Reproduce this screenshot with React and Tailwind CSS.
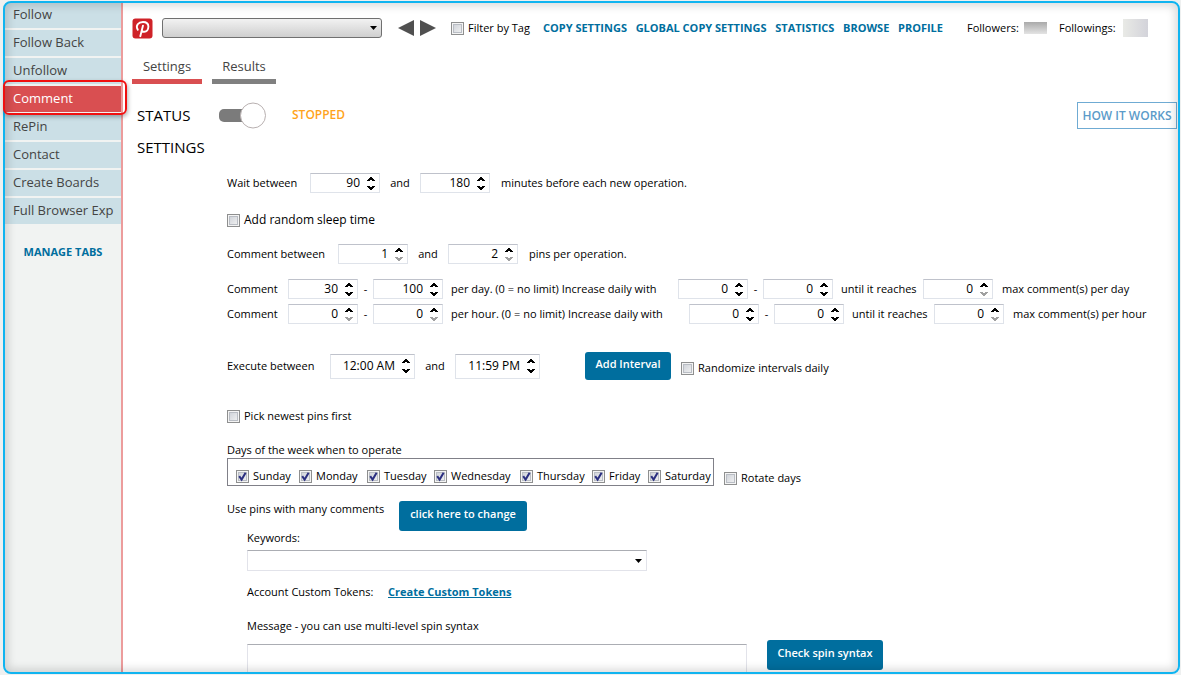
import { useState } from "react";

const tabs = ["Follow", "Follow Back", "Unfollow", "Comment", "RePin", "Contact", "Create Boards", "Full Browser Exp"];
const topLinks = ["COPY SETTINGS", "GLOBAL COPY SETTINGS", "STATISTICS", "BROWSE", "PROFILE"];
const days = [
  ["Sunday", "w-[63px]"],
  ["Monday", "w-[68px]"],
  ["Tuesday", "w-[67px]"],
  ["Wednesday", "w-[86px]"],
  ["Thursday", "w-[72px]"],
  ["Friday", "w-[56px]"],
  ["Saturday", "w-[64px]"],
];

function Check({ label, checked = false, className = "" }) {
  return (
    <label className={`flex shrink-0 items-center gap-1 whitespace-nowrap ${className}`}>
      <span className="relative flex shrink-0">
        <input
          type="checkbox"
          defaultChecked={checked}
          className="peer size-[13px] appearance-none border border-[#8e8f8f] bg-linear-to-br from-[#c9cdd4] to-[#f6f6f6] shadow-[inset_0_0_0_1px_#f4f4f4,inset_0_0_0_2px_#b9bdc4]"
        />
        <svg viewBox="0 0 13 13" className="pointer-events-none absolute inset-0 hidden size-[13px] peer-checked:block">
          <path d="M3.2 6.2 L5.6 9.6 L9.6 2.8" fill="none" stroke="#2b2f80" strokeWidth="2" />
        </svg>
      </span>
      {label}
    </label>
  );
}

function Spin({ label, value, time = false, atMin = false }) {
  const [n, setN] = useState(value);
  const step = (d) => !time && setN((v) => Math.max(0, Number(v) + d));
  return (
    <span
      className={`flex shrink-0 border border-[#dfe3ea] border-t-[#bfc2cb] bg-white ${time ? "h-[25px] w-[85px]" : "h-5 w-[70px]"}`}
    >
      <input
        aria-label={label}
        value={n}
        onChange={(e) => setN(e.target.value)}
        className="w-0 min-w-0 flex-1 bg-transparent pr-[2px] text-right text-xs outline-none"
      />
      <span className={`flex w-[17px] flex-col items-center justify-center ${time ? "gap-1" : "gap-[3px]"}`}>
        <button type="button" aria-label={`Increase ${label}`} onClick={() => step(1)}>
          <svg viewBox="0 0 8 5" className="block h-[5px] w-2" shapeRendering="crispEdges">
            <path d="M3 0h2v1h1v1h1v1h1v1H5V3H3v1H0V3h1V2h1V1h1z" fill="#000" />
          </svg>
        </button>
        <button type="button" aria-label={`Decrease ${label}`} onClick={() => step(-1)}>
          <svg viewBox="0 0 8 5" className="block h-[5px] w-2" shapeRendering="crispEdges">
            <path d="M0 1h3v1h2V1h3v1H7v1H6v1H5v1H3V4H2V3H1V2H0z" fill={atMin ? "#a0a0a0" : "#000"} />
          </svg>
        </button>
      </span>
    </span>
  );
}

function Caret({ className = "" }) {
  return (
    <svg viewBox="0 0 7 4" className={`pointer-events-none absolute h-1 w-[7px] ${className}`}>
      <path d="M0 0h7L3.5 4z" fill="#000" />
    </svg>
  );
}

function Button({ children, className = "" }) {
  return (
    <button
      type="button"
      className={`shrink-0 rounded-[3px] bg-[#006e9e] px-[10px] pb-1 font-semibold whitespace-nowrap text-white ${className}`}
    >
      {children}
    </button>
  );
}

function Limits({ unit, low, high, unitWidth, atMin }) {
  return (
    <div className="flex items-center whitespace-nowrap">
      <span className="w-[61px] shrink-0">Comment</span>
      <Spin label={`Minimum comments per ${unit}`} value={low} atMin={atMin} />
      <span className="w-[15px] shrink-0 text-center">-</span>
      <Spin label={`Maximum comments per ${unit}`} value={high} atMin={atMin} />
      <span className={`shrink-0 pl-2 ${unitWidth}`}>per {unit}. (0 = no limit) Increase daily with</span>
      <Spin label={`Smallest increase per ${unit}`} value={0} />
      <span className="w-[15px] shrink-0 text-center">-</span>
      <Spin label={`Largest increase per ${unit}`} value={0} />
      <span className="w-[90px] shrink-0 pl-2">until it reaches</span>
      <Spin label={`Comment ceiling per ${unit}`} value={0} atMin />
      <span className="pl-[9px]">max comment(s) per {unit}</span>
    </div>
  );
}

export default function App() {
  const [active, setActive] = useState("Comment");
  return (
    <div className="relative flex h-screen overflow-hidden bg-white font-['Open_Sans','Noto_Sans',sans-serif] text-[11px] leading-4 text-black">
      <nav className="relative w-[123px] shrink-0 border-r-2 border-[#ec9c9c] bg-[#f1f3f2] pt-[2px]">
        {tabs.map((t) => (
          <button
            key={t}
            type="button"
            onClick={() => setActive(t)}
            className={`mb-[2px] block h-[26px] w-full pb-[2px] pl-[13px] text-left text-[13px] leading-5 whitespace-nowrap ${
              active === t ? "bg-[#d94f51] text-white" : "bg-[#cbdfe6] text-[#444]"
            }`}
          >
            {t}
          </button>
        ))}
        <a href="#tabs" className="mt-5 block pl-[5px] text-center font-bold text-[#006e9e]">
          MANAGE TABS
        </a>
        <span className="pointer-events-none absolute top-20 -right-[6px] left-[3px] z-20 h-[35px] rounded-md border-2 border-[#f01010] shadow-[1px_2px_4px_rgba(0,0,0,0.3)]" />
      </nav>

      <main className="flex min-w-0 flex-1 flex-col overflow-hidden pl-[9px]">
        <header className="mt-4 flex h-6 shrink-0 items-center whitespace-nowrap">
          <svg viewBox="0 0 21 21" className="size-[21px] shrink-0">
            <rect x="0.500" y="0.500" width="20" height="20" rx="3" fill="#cf2228" />
            <path
              d="M5.800 11.800C3.200 7.400 6.400 4 11 4c3.400 0 5.400 2 5.400 4.600 0 3.100-1.800 5.200-4.100 5.200-1.300 0-2.100-.7-2.400-1.500M11 7.600L8.300 18.200"
              fill="none"
              stroke="#fff"
              strokeWidth="1.900"
              strokeLinecap="round"
            />
          </svg>
          <span className="relative ml-[9px] w-[220px] shrink-0">
            <select
              aria-label="Account"
              className="block h-5 w-full appearance-none rounded-[3px] border border-[#707070] bg-linear-to-b from-[#f2f2f2] to-[#cfcfcf]"
            />
            <Caret className="top-2 right-[5px]" />
          </span>
          <button type="button" aria-label="Previous account" className="ml-4">
            <svg viewBox="0 0 16 16" className="size-4">
              <path d="M16 0v16L0 8z" fill="#505050" />
            </svg>
          </button>
          <button type="button" aria-label="Next account" className="ml-[6px]">
            <svg viewBox="0 0 16 16" className="size-4">
              <path d="M0 0v16l16-8z" fill="#505050" />
            </svg>
          </button>
          <Check label="Filter by Tag" className="ml-[15px] w-[92px]" />
          <div className="flex w-[400px] shrink-0 justify-between font-bold text-[#006e9e]">
            {topLinks.map((l) => (
              <a key={l} href={`#${l.toLowerCase().replaceAll(" ", "-")}`}>
                {l}
              </a>
            ))}
          </div>
          <span className="ml-6 w-[57px]">Followers:</span>
          <span className="h-3 w-[23px] bg-linear-to-b from-[#aaa] to-[#e4e4e4]" />
          <span className="ml-3 w-16">Followings:</span>
          <span className="h-[18px] w-[25px] bg-linear-to-r from-[#e9eae6] to-[#d3d3da]" />
        </header>

        <div className="mt-4 flex shrink-0 gap-[10px] text-[13px] leading-5 text-[#444]">
          <button type="button" className="w-[70px] border-b-[5px] border-[#d94f51] pb-[3px] text-center">
            Settings
          </button>
          <button type="button" className="w-16 border-b-[5px] border-[#808080] pb-[3px] text-center">
            Results
          </button>
        </div>

        <section className="mt-[14px] flex shrink-0 items-start justify-between pr-1 pl-[5px]">
          <div className="flex items-center pt-[3px]">
            <h2 className="w-[82px] text-[15px] leading-6">STATUS</h2>
            <button type="button" role="switch" aria-checked="false" aria-label="Status" className="flex">
              <svg viewBox="0 0 48 28" className="h-7 w-12">
                <rect x="0" y="8" width="40" height="13" rx="5" fill="#7b7b7b" />
                <circle cx="34" cy="14.500" r="12.500" fill="#fff" stroke="#b8b0b0" />
              </svg>
            </button>
            <span className="ml-[25px] text-xs font-semibold text-[#ffa31a]">STOPPED</span>
          </div>
          <button
            type="button"
            className="mt-1 h-[27px] w-[100px] border border-[#6fabd3] text-xs font-semibold whitespace-nowrap text-[#5b9bc9]"
          >
            HOW IT WORKS
          </button>
        </section>

        <h2 className="mt-2 shrink-0 pl-[5px] text-[15px] leading-5">SETTINGS</h2>

        <form className="shrink-0 pl-[95px] [&>div]:whitespace-nowrap">
          <div className="mt-4 flex items-center">
            <span className="w-[83px] shrink-0">Wait between</span>
            <Spin label="Minimum minutes" value={90} />
            <span className="w-10 shrink-0 text-center">and</span>
            <Spin label="Maximum minutes" value={180} />
            <span className="pl-[11px]">minutes before each new operation.</span>
          </div>
          <Check label="Add random sleep time" className="mt-[17px] text-xs leading-5" />
          <div className="mt-[14px] flex items-center">
            <span className="w-[111px] shrink-0">Comment between</span>
            <Spin label="Minimum pins" value={1} atMin />
            <span className="w-10 shrink-0 text-center">and</span>
            <Spin label="Maximum pins" value={2} atMin />
            <span className="pl-[11px]">pins per operation.</span>
          </div>
          <div className="mt-[15px] flex flex-col gap-[5px]">
            <Limits unit="day" low={30} high={100} unitWidth="w-[235px]" />
            <Limits unit="hour" low={0} high={0} unitWidth="w-[246px]" atMin />
          </div>
          <div className="mt-7 flex h-7 items-center">
            <span className="w-[103px] shrink-0">Execute between</span>
            <Spin label="Start time" value="12:00 AM" time />
            <span className="w-10 shrink-0 text-center">and</span>
            <Spin label="End time" value="11:59 PM" time />
            <Button className="ml-[45px] h-7 w-[86px]">Add Interval</Button>
            <Check label="Randomize intervals daily" className="ml-[10px] pt-1" />
          </div>
          <Check label="Pick newest pins first" className="mt-7" />

          <fieldset className="mt-[18px]">
            <legend>Days of the week when to operate</legend>
            <div className="flex items-center">
              <div className="flex h-7 w-[487px] shrink-0 items-end border border-[#808088] pb-[1px] pl-2">
                {days.map(([d, w]) => (
                  <Check key={d} label={d} checked className={w} />
                ))}
              </div>
              <Check label="Rotate days" className="ml-[10px] pt-3" />
            </div>
          </fieldset>

          <div className="mt-[15px] flex items-start">
            <span className="w-[172px] shrink-0">Use pins with many comments</span>
            <Button className="h-[30px] w-32">click here to change</Button>
          </div>

          <div className="-mt-[1px] pl-5">
            <label htmlFor="keywords" className="block">
              Keywords:
            </label>
            <span className="relative mt-1 block w-[400px]">
              <select
                id="keywords"
                className="block h-[21px] w-full appearance-none border border-[#e2e3ea] border-t-[#abadb3] bg-white"
              />
              <Caret className="top-[9px] right-[5px]" />
            </span>
            <p className="mt-[13px] flex">
              <span className="w-[141px] shrink-0">Account Custom Tokens:</span>
              <a href="#tokens" className="font-bold text-[#006e9e] underline">
                Create Custom Tokens
              </a>
            </p>
            <label htmlFor="message" className="mt-[18px] block">
              Message - you can use multi-level spin syntax
            </label>
            <div className="mt-[6px] flex items-start gap-5">
              <textarea
                id="message"
                className="mt-1 block h-20 w-[500px] resize-none border border-[#e2e3ea] border-t-[#abadb3] bg-white"
              />
              <Button className="h-[30px] w-[116px]">Check spin syntax</Button>
            </div>
          </div>
        </form>
      </main>

      <div className="pointer-events-none absolute top-[1px] right-[1px] bottom-[1px] left-[3px] z-10 rounded-lg border-2 border-[#10b4f0] shadow-[inset_0_0_8px_3px_rgba(0,0,0,0.15),0_0_0_8px_#eef0f0]" />
    </div>
  );
}
